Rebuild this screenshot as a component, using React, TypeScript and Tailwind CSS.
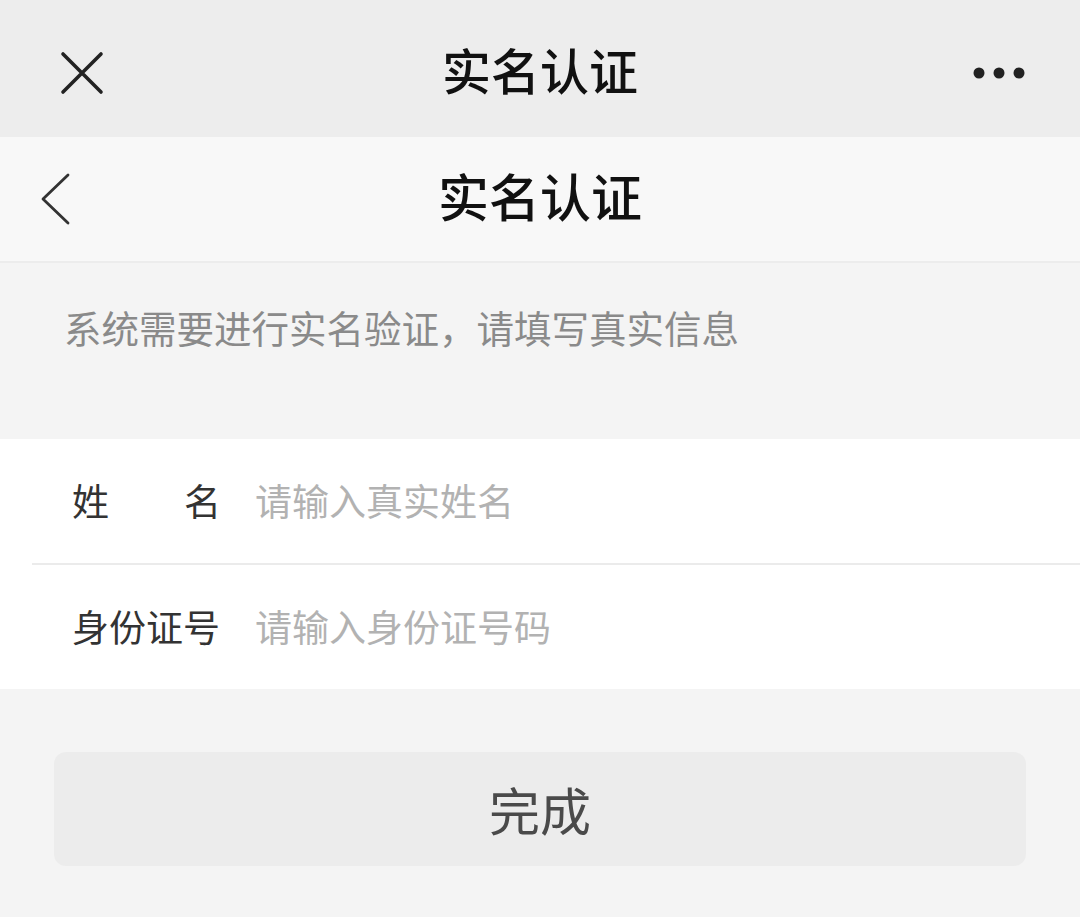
import React from "react";

export default function App() {
  const font = { fontFamily: '"Noto Sans CJK SC", "Noto Sans", sans-serif' };
  return (
    <div className="w-[1080px] h-[917px] bg-[#f4f4f4] overflow-hidden" style={font}>
      {/* top bar */}
      <div className="relative h-[137px] bg-[#ededed] flex items-center justify-center">
        <svg className="absolute left-[60px] top-[51px]" width="44" height="44" viewBox="0 0 44 44">
          <path d="M3 3 L41 41 M41 3 L3 41" stroke="#222" strokeWidth="3.6" strokeLinecap="round" fill="none" />
        </svg>
        <span className="text-[49px] leading-none font-medium text-[#111]">实名认证</span>
        <svg className="absolute left-[970px] top-[63px]" width="60" height="20" viewBox="0 0 60 20">
          <circle cx="9" cy="10" r="5.5" fill="#222" />
          <circle cx="29" cy="10" r="5.5" fill="#222" />
          <circle cx="49" cy="10" r="5.5" fill="#222" />
        </svg>
      </div>
      {/* second bar */}
      <div className="relative h-[126px] bg-[#f8f8f8] border-b-2 border-[#ececec] flex items-center justify-center pb-[8px]">
        <svg className="absolute left-[38px] top-[34px]" width="36" height="56" viewBox="0 0 36 56">
          <path d="M30 4 L5 28 L30 52" stroke="#333" strokeWidth="2.8" strokeLinecap="round" strokeLinejoin="round" fill="none" />
        </svg>
        <span className="text-[51px] leading-none font-medium text-[#111]">实名认证</span>
      </div>
      {/* description */}
      <div className="h-[176px] pl-[64px] pt-[38px]">
        <div className="text-[37.5px] leading-[52px] text-[#8a8a8a]">系统需要进行实名验证，请填写真实信息</div>
      </div>
      {/* form */}
      <div className="bg-white">
        <div className="h-[124px] flex items-center pl-[72px]">
          <div className="w-[149px] flex justify-between text-[37px] text-[#333]">
            <span>姓</span>
            <span>名</span>
          </div>
          <div className="ml-[34px] text-[37px] text-[#b2b2b2]">请输入真实姓名</div>
        </div>
        <div className="ml-[32px] h-[2px] bg-[#ebebeb]" />
        <div className="h-[124px] flex items-center pl-[72px]">
          <div className="w-[149px] text-[37px] text-[#333]">身份证号</div>
          <div className="ml-[34px] text-[37px] text-[#b2b2b2]">请输入身份证号码</div>
        </div>
      </div>
      {/* button */}
      <div className="px-[54px] pt-[63px]">
        <div className="h-[114px] rounded-[12px] bg-[#ececec] flex items-center justify-center">
          <span className="text-[51px] leading-none text-[#4a4a4a]">完成</span>
        </div>
      </div>
    </div>
  );
}
